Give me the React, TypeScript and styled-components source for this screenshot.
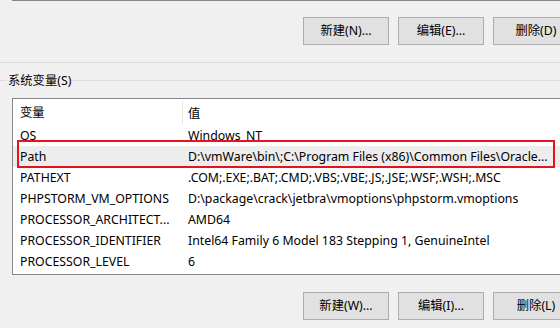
import React from "react";
import styled, { createGlobalStyle } from "styled-components";

const GlobalStyle = createGlobalStyle`
  html, body {
    margin: 0;
    padding: 0;
    background: #f0f0f0;
    overflow: hidden;
  }
  body {
    font-family: "Noto Sans", "Noto Sans CJK SC", sans-serif;
    font-size: 12.3px;
    color: #000;
  }
`;

const Dialog = styled.div`
  width: 560px;
  height: 328px;
  overflow: hidden;
  display: flex;
  flex-direction: column;
  background: #f0f0f0;
`;

const ListEdge = styled.div`
  flex: none;
  margin-left: 12px;
  width: 566px;
  height: 1px;
  background: #828790;
`;

const ButtonRow = styled.div<{ $top: number }>`
  flex: none;
  margin-top: ${(p) => p.$top}px;
  padding-left: 303px;
  display: flex;
  gap: 9px;
`;

const Button = styled.div`
  flex: none;
  box-sizing: border-box;
  width: 86px;
  height: 28px;
  border: 1px solid #adadad;
  background: #e1e1e1;
  display: flex;
  align-items: center;
  justify-content: center;
  line-height: 1;
  white-space: nowrap;
`;

const Separator = styled.div`
  flex: none;
  margin-top: 17px;
  height: 1px;
  background: #dadada;
`;

const Legend = styled.div`
  flex: none;
  margin-top: 10px;
  height: 15px;
  display: flex;
  align-items: center;
`;

const LegendLine = styled.div<{ $grow?: boolean }>`
  height: 1px;
  background: #dcdcdc;
  width: 7px;
  flex: ${(p) => (p.$grow ? 1 : "none")};
`;

const LegendText = styled.span`
  padding: 0 1px;
  line-height: 15px;
  white-space: nowrap;
`;

const ListBox = styled.div`
  flex: none;
  position: relative;
  box-sizing: border-box;
  margin-top: 10px;
  margin-left: 12px;
  width: 566px;
  height: 177px;
  border: 1px solid #828790;
  background: #fff;
  display: flex;
  flex-direction: column;
`;

const HeaderRow = styled.div`
  height: 26px;
  display: grid;
  grid-template-columns: 169px 1fr;
  align-items: stretch;
`;

const HeaderCell = styled.div<{ $divider?: boolean }>`
  display: flex;
  align-items: center;
  padding-left: ${(p) => (p.$divider ? 5 : 7)}px;
  margin: ${(p) => (p.$divider ? "2px 0 1px" : "0")};
  border-left: ${(p) => (p.$divider ? "1px solid #e5e5e5" : "none")};
  white-space: nowrap;
`;

const Row = styled.div<{ $selected?: boolean }>`
  height: 21px;
  display: grid;
  grid-template-columns: 169px 1fr;
  align-items: center;
  background: ${(p) => (p.$selected ? "#ededed" : "transparent")};
`;

const Cell = styled.div<{ $second?: boolean }>`
  padding-left: ${(p) => (p.$second ? 6 : 7)}px;
  white-space: nowrap;
  overflow: hidden;
  line-height: 21px;
`;

const Highlight = styled.div`
  position: absolute;
  left: 4px;
  top: 41px;
  width: 538px;
  height: 28px;
  box-sizing: border-box;
  border: 2px solid #e3141e;
  pointer-events: none;
`;

const rows: [string, string][] = [
  ["OS", "Windows_NT"],
  ["Path", "D:\\vmWare\\bin\\;C:\\Program Files (x86)\\Common Files\\Oracle..."],
  ["PATHEXT", ".COM;.EXE;.BAT;.CMD;.VBS;.VBE;.JS;.JSE;.WSF;.WSH;.MSC"],
  ["PHPSTORM_VM_OPTIONS", "D:\\package\\crack\\jetbra\\vmoptions\\phpstorm.vmoptions"],
  ["PROCESSOR_ARCHITECT...", "AMD64"],
  ["PROCESSOR_IDENTIFIER", "Intel64 Family 6 Model 183 Stepping 1, GenuineIntel"],
  ["PROCESSOR_LEVEL", "6"],
];

export default function App() {
  return (
    <>
      <GlobalStyle />
      <Dialog>
        <ListEdge />
        <ButtonRow $top={16}>
          <Button>新建(N)...</Button>
          <Button>编辑(E)...</Button>
          <Button>删除(D)</Button>
        </ButtonRow>
        <Separator />
        <Legend>
          <LegendLine />
          <LegendText>系统变量(S)</LegendText>
          <LegendLine $grow />
        </Legend>
        <ListBox>
          <HeaderRow>
            <HeaderCell>变量</HeaderCell>
            <HeaderCell $divider>值</HeaderCell>
          </HeaderRow>
          {rows.map(([name, value]) => (
            <Row key={name} $selected={name === "Path"}>
              <Cell>{name}</Cell>
              <Cell $second>{value}</Cell>
            </Row>
          ))}
          <Highlight />
        </ListBox>
        <ButtonRow $top={17}>
          <Button>新建(W)...</Button>
          <Button>编辑(I)...</Button>
          <Button>删除(L)</Button>
        </ButtonRow>
      </Dialog>
    </>
  );
}
